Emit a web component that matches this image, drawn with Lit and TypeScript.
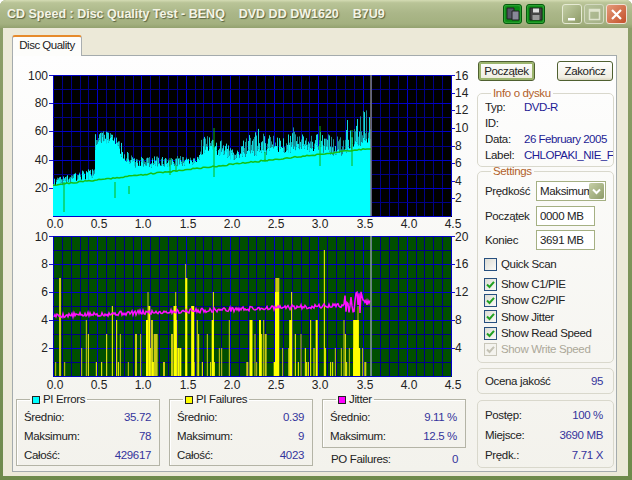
import { LitElement, html, css, svg } from "lit";
import { customElement } from "lit/decorators.js";

const X0 = 53, X1 = 451, PX = (X1 - X0) / 4.5;
const T0 = 75, T1 = 216, B0 = 236, B1 = 376;
const END = 371;

function rng(seed: number) {
  let s = seed;
  return () => {
    s = (s * 1664525 + 1013904223) % 4294967296;
    return s / 4294967296;
  };
}
function lerp(pts: number[][], u: number) {
  for (let i = 1; i < pts.length; i++) {
    if (u <= pts[i][0]) {
      const [a, b] = pts[i - 1], [c, d] = pts[i];
      return b + ((u - a) / (c - a)) * (d - b);
    }
  }
  return pts[pts.length - 1][1];
}
const SOLID = [[0,24],[.1,24],[.2,27],[.3,28],[.4,29],[.475,30],[.48,50],[.55,55],[.7,54],[.75,46],[.8,41],[.85,38],[1,37],[1.5,38],[1.65,39],[1.7,47],[1.8,50],[1.85,46],[1.95,44],[2,42],[2.2,45],[2.5,47],[2.7,48],[3,49],[3.2,45],[3.33,47],[3.4,52],[3.6,54]];
const ENV = [[0,27],[.2,29],[.3,32],[.47,35],[.48,62],[.6,60],[.7,58],[.8,50],[.9,42],[1,42],[1.4,43],[1.5,42],[1.65,42],[1.68,56],[1.8,62],[1.9,54],[2,50],[2.05,48],[2.2,56],[2.3,64],[2.4,58],[2.7,60],[2.71,70],[2.75,58],[3,60],[3.2,57],[3.3,58],[3.35,77],[3.5,76],[3.6,74]];
const YT = (v: number) => T1 - v * 1.41;
const YB = (v: number) => B1 - v * 14;

function cyanPaths() {
  const r = rng(7);
  let solid = "", spikes = "", bright = "";
  for (let x = X0 + 0.5; x < END; x += 1) {
    const u = (x - X0) / PX;
    const s = lerp(SOLID, u) + (r() - 0.5) * 6;
    const e = s + (lerp(ENV, u) - s) * (0.15 + 0.85 * r());
    solid += `M${x} ${T1}V${YT(s).toFixed(1)}`;
    if (e > s) {
      const seg = `M${x} ${YT(s).toFixed(1)}V${YT(e).toFixed(1)}`;
      if (r() < 0.4) bright += seg;
      else if (r() < 0.75) spikes += seg;
    }
  }
  return { solid, spikes, bright };
}
function greenPath() {
  const r = rng(21);
  let d = "";
  for (let x = X0; x <= END; x += 2) {
    const u = (x - X0) / PX;
    d += `${d ? "L" : "M"}${x} ${YT(22 + (26 * u) / 3.6 + (r() - 0.5) * 1).toFixed(1)}`;
  }
  return d;
}
const GREEN_SPIKES = [[64,182,212],[115,182,198],[129,186,194],[170,158,175],[176,165,172],[214,128,177],[265,152,162],[320,126,166],[352,130,166]];

function magentaPath() {
  const r = rng(5);
  let d = "";
  for (let x = X0 + 1; x <= END - 1; x += 1) {
    const u = (x - X0) / PX;
    let v = 4.3 + (u / 3.3) * 0.75 + (r() - 0.5) * 0.32;
    if (u > 3.3) {
      const amp = u > 3.5 ? 0.35 : 1.6;
      v = 5.25 + (r() - 0.5) * amp;
    }
    d += `${d ? "L" : "M"}${x} ${YB(v).toFixed(1)}`;
  }
  return d;
}
const Z9 = (z: number) => 20 + z / 3;
const Z10 = (z: number) => 240 + z / 3;
const BARS: [number, number, number, number][] = [
  [Z9(107),1,1,1],[Z9(120),7,2,1],[Z9(134),1,1,1],[Z9(185),2,1,1],[Z9(199),4,1,1],[Z9(205),3,1,0],[Z9(229),1,1,0],[Z9(245),1,1,0],[Z9(260),3,1,0],[Z9(277),5,1,0],[Z9(290),4,1,0],[Z9(295),1,1,0],[Z9(301),3,1,1],[Z9(325),1,1,1],[Z9(348),3,2,1],[Z9(362),3,1,1],[Z9(384),6,1,1],[Z9(381),4,2,0],[Z9(388),5,2,0],[Z9(391),2,1,0],[Z9(396),4,2,1],[Z9(400),1,3,0],[Z9(407),3,4,1],[Z9(432),1,2,1],[Z9(456),3,2,1],[Z9(467),6,1,1],[Z9(465),5,3,0],[Z9(470),4,1,0],[Z9(475),2,2,0],[Z9(481),2,2,0],[Z9(497),8,1,1],[Z9(499),7,2,0],[Z9(518),5,3,0],[Z9(522),1,1,0],[Z9(532),4,1,1],[Z9(536),3,1,0],[Z9(547),1,1,0],[Z9(562),3,1,1],[Z9(572),1,1,0],[Z9(578),4,2,0],[Z9(580),6,1,0],[Z9(583),1,1,0],[Z9(598),2,1,1],[Z9(605),2,1,1],[Z9(628),4,1,1],[Z9(682),1,2,1],
  [Z10(22),1,1,1],[Z10(33),4,3,0],[Z10(45),3,1,1],[Z10(50),1,1,1],[Z10(60),4,2,0],[Z10(65),3,1,0],[Z10(71),4,1,1],[Z10(77),3,2,1],[Z10(104),1,2,0],[Z10(112),7,4,1],[Z10(111),6,4,0],[Z10(128),2,1,1],[Z10(146),2,1,1],[Z10(152),4,3,0],[Z10(155),6,1,0],[Z10(166),3,1,0],[Z10(175),1,1,0],[Z10(183),3,1,1],[Z10(196),2,1,0],[Z10(200),1,1,0],[Z10(205),1,1,0],[Z10(212),4,1,0],[Z10(222),2,1,0],[Z10(230),4,2,0],[Z10(253),9,1,0],[Z10(256),2,1,0],[Z10(272),1,1,0],[Z10(278),1,1,0],[Z10(286),2,1,1],[Z10(304),2,1,1],[Z10(312),4,1,1],[Z10(316),3,1,0],[Z10(320),1,1,0],[Z10(328),2,1,1],[Z10(344),4,3,0],[Z10(354),5,1,1],[Z10(350),2,7,0],[Z10(352),4,3,0],[Z10(368),2,1,1],[Z10(376),1,2,1],
];

function grid(y0: number, y1: number, hCount: number) {
  const out = [];
  for (let i = 0; i <= 45; i++) {
    const x = Math.round(X0 + i * PX / 10) + 0.5;
    out.push(svg`<line class=${i % 5 === 0 ? "maj" : "min"} x1=${x} x2=${x} y1=${y0} y2=${y1}></line>`);
  }
  for (let i = 0; i <= hCount; i++) {
    const y = Math.round(y0 + ((y1 - y0) * i) / hCount) + 0.5;
    out.push(svg`<line class=${i % 2 === 0 ? "maj" : "min"} x1=${X0} x2=${X1} y1=${y} y2=${y}></line>`);
  }
  return out;
}
function xLabels(y: number) {
  return ["0.0","0.5","1.0","1.5","2.0","2.5","3.0","3.5","4.0","4.5"].map(
    (t, i) => svg`<text class="lbl mid" x=${Math.round(X0 + 2 + i * PX / 2)} y=${y}>${t}</text>`
  );
}
function yLabels(y0: number, y1: number, vals: string[], right: boolean) {
  const step = (y1 - y0) / vals.length;
  return vals.map((t, i) => {
    const y = Math.round(y0 + i * step);
    return svg`
      <line class="tick" x1=${right ? X1 : 49} x2=${right ? 455 : X0} y1=${y + 0.5} y2=${y + 0.5}></line>
      <text class=${right ? "lbl" : "lbl end"} x=${right ? 455 : 48} y=${y + 4 + (i === 0 ? 1 : 0)}>${t}</text>`;
  });
}

const Check = svg`<path d="M3 6.500 5.500 9 10 3.800" fill="none" stroke-width="2"></path>`;

@customElement("app-root")
export class AppRoot extends LitElement {
  static styles = css`
    :host { display: block; width: 632px; height: 480px; overflow: hidden; font: 11.5px "Liberation Sans", Arial, sans-serif; letter-spacing: -0.35px; color: #222; }
    * { box-sizing: border-box; }
    .win { width: 632px; height: 480px; display: flex; flex-direction: column;
      background: linear-gradient(#8f9f6b, #6e8a4b); border-radius: 6px 6px 0 0; }
    .title { height: 28px; flex: none; display: flex; align-items: center; padding: 0 5px 0 7px;
      background: linear-gradient(#d4dcb4 0, #b9c497 10%, #abb789 45%, #a3b07f 85%, #93a16f 100%); border-radius: 6px 6px 0 0; }
    .title h1 { margin: 0; flex: 1; font: bold 12.5px "Liberation Sans", Arial, sans-serif; letter-spacing: 0; white-space: pre; color: #f4f4e6; text-shadow: 1px 1px 1px #5a6440; }
    .tools { display: flex; gap: 4px; margin-right: 17px; }
    .tool { width: 19px; height: 20px; border-radius: 3px; background: #0a8a14; border: 1px solid #045c0c; box-shadow: inset 0 0 2px #7fdc7f; display: grid; place-items: center; }
    .caps { display: flex; gap: 2px; }
    .cap { width: 20px; height: 20px; border-radius: 3px; border: 1px solid #e6ead4; background: linear-gradient(135deg, #c2cda4, #8e9b68); display: grid; place-items: center; }
    .cap.dim { background: linear-gradient(135deg, #b6c29a, #a4b086); border-color: #d3d9c0; }
    .cap.close { width: 21px; background: linear-gradient(135deg, #e49a7a, #c4502a); border-color: #f0e0d4; }
    .client { flex: 1; margin: 0 4px 4px 3px; background: #ece9d8; padding: 7px 11px 4px 9px; display: flex; flex-direction: column; }
    .tab { align-self: flex-start; width: 70px; height: 21px; margin-bottom: -1px; position: relative; z-index: 1; background: #fdfdfb;
      border: 1px solid #a9aeb0; border-bottom: 0; border-top: 2px solid #e68b2c; border-radius: 3px 3px 0 0;
      text-align: center; line-height: 17px; letter-spacing: -0.5px; }
    .panel { flex: 1; display: flex; border: 1px solid #a4abad; background: linear-gradient(#fefefe, #f3f2ec); min-height: 0; }
    .left { width: 464px; flex: none; padding: 9px 0 0 3px; display: flex; flex-direction: column; }
    svg.chart { display: block; width: 458px; height: 328px; margin-left: -4px; }
    .min { stroke: #000088; stroke-width: 1; }
    .maj { stroke: #0000c8; stroke-width: 1; }
    .tick { stroke: #1414d0; stroke-width: 1; }
    .lbl { font: 12px "Liberation Sans", Arial, sans-serif; letter-spacing: 0; fill: #222; }
    .end { text-anchor: end; }
    .mid { text-anchor: middle; }
    .stats { display: flex; gap: 9px; }
    fieldset { margin: 0; padding: 0; min-width: 0; }
    legend { padding: 0 2px; margin-left: 6px; line-height: 13px; display: flex; align-items: center; gap: 3px; }
    .sq { width: 144px; height: 73px; border: 1px solid #b4b4a6; box-shadow: inset 1px 1px 0 #fff; padding: 1px 8px 0 7px; }
    .sq.short { height: 55px; }
    .swatch { width: 8px; height: 8px; border: 1px solid #222; display: inline-block; }
    .cy { background: #00ffff; } .ye { background: #ffff00; } .ma { background: #ff00ff; }
    .row { display: flex; justify-content: space-between; align-items: center; height: 19px; }
    .val { color: #34349c; }
    .col3 { width: 144px; display: flex; flex-direction: column; }
    .po { padding: 1px 8px 0 9px; }
    .right { width: 137px; flex: none; padding-top: 5px; display: flex; flex-direction: column; }
    .btns { display: flex; justify-content: space-between; padding: 0 1px; height: 20px; }
    .btn { width: 56px; border-radius: 3px; border: 1px solid #4f6030; background: linear-gradient(#fff, #f0eee2 85%, #d8d4c0); display: grid; place-items: center; }
    .btn.def { box-shadow: inset 0 0 0 2px #9cb56e; width: 57px; }
    .rd { border: 1px solid #d9d8cc; border-radius: 5px; }
    .info { margin-top: 6px; height: 80px; padding: 0 0 0 7px; }
    .rd > legend { color: #b2612a; }
    .irow { display: grid; grid-template-columns: 39px 1fr; height: 16px; line-height: 14px; white-space: nowrap; overflow: hidden; }
    .navy { color: #1c1c94; letter-spacing: -0.5px; }
    .settings { margin-top: -2px; height: 198px; padding: 3px 0 0 7px; }
    .frow { display: grid; grid-template-columns: 51px auto; align-items: center; justify-content: start; }
    .frow + .frow { margin-top: 4px; }
    .frow.first { height: 21px; align-items: start; }
    .frow.first > span { line-height: 20px; }
    .sel, .inp { height: 20px; border: 1px solid #a5b083; background: #fff; display: flex; align-items: center; padding-left: 3px; overflow: hidden; white-space: nowrap; }
    .sel { width: 70px; justify-content: space-between; padding-right: 1px; }
    .sel span { width: 51px; overflow: hidden; }
    .arrow { width: 15px; height: 16px; flex: none; border-radius: 2px; background: linear-gradient(135deg, #c6cfa6, #8d9b69); display: grid; place-items: center; }
    .inp { width: 59px; }
    .chk { display: flex; align-items: center; gap: 4px; height: 16.3px; margin-left: -1px; }
    .chk.q { margin: 6px 0 4px -1px; height: 16px; }
    .box { width: 13px; height: 13px; flex: none; border: 1px solid #27507f; background: linear-gradient(135deg, #dcdcd4, #fbfbf8); display: grid; place-items: center; }
    .box svg { stroke: #21a121; width: 13px; height: 13px; margin: -1px; }
    .off { color: #aca899; }
    .off .box { border-color: #c9c7ba; background: #f4f3ee; }
    .off .box svg { stroke: #c4c2b4; }
    .ocena { margin-top: 5px; height: 26px; padding: 0 10px 0 7px; }
    .prog { margin-top: 6px; height: 68px; padding: 4px 10px 0 7px; }
    .prog .row { height: 20px; }
    .ocena .row { height: 24px; }
  `;

  private stat(label: string, val: string) {
    return html`<div class="row"><span>${label}</span><span class="val">${val}</span></div>`;
  }
  private irow(label: string, val: string) {
    return html`<div class="irow"><span>${label}</span><span class="navy">${val}</span></div>`;
  }
  private chk(label: string, on: boolean, cls = "") {
    return html`<div class="chk ${cls}"><span class="box">${on ? html`<svg viewBox="0 0 13 13">${Check}</svg>` : ""}</span>${label}</div>`;
  }

  render() {
    const { solid, spikes, bright } = cyanPaths();
    return html`
      <div class="win">
        <div class="title">
          <h1>CD Speed : Disc Quality Test - BENQ    DVD DD DW1620    B7U9</h1>
          <div class="tools">
            <div class="tool"><svg width="14" height="14" viewBox="0 0 14 14"><path d="M1 1h7v11H1z" fill="#556" stroke="#222"></path><path d="M6 4h7v9H6z" fill="#889" stroke="#222"></path></svg></div>
            <div class="tool"><svg width="14" height="14" viewBox="0 0 14 14"><path d="M1 1h12v12H1z" fill="#444" stroke="#222"></path><path d="M4 1.500h6v4H4z" fill="#ddd"></path><path d="M3.500 8h7v5h-7z" fill="#999"></path></svg></div>
          </div>
          <div class="caps">
            <div class="cap"><svg width="13" height="13" viewBox="0 0 13 13"><path d="M2 10h7v2.500H2z" fill="#fff"></path></svg></div>
            <div class="cap dim"><svg width="13" height="13" viewBox="0 0 13 13"><path d="M1.500 1.500h10v10h-10z M1.500 3h10" fill="none" stroke="#dfe4cd" stroke-width="1.500"></path></svg></div>
            <div class="cap close"><svg width="13" height="13" viewBox="0 0 13 13"><path d="M2 2l9 9M11 2l-9 9" stroke="#fff" stroke-width="2.200"></path></svg></div>
          </div>
        </div>
        <div class="client">
          <div class="tab">Disc Quality</div>
          <div class="panel">
            <div class="left">
              <svg class="chart" viewBox="12 65 458 328">
                <rect x=${X0} y=${T0} width=${X1 - X0 + 1} height=${T1 - T0 + 1} fill="#000"></rect>
                ${grid(T0, T1, 10)}
                <path d=${spikes} stroke="#178f96" stroke-width="1" fill="none"></path>
                <path d=${bright} stroke="#10d8dc" stroke-width="1" fill="none"></path>
                <path d=${solid} stroke="#00ffff" stroke-width="1" fill="none"></path>
                <line x1=${END} x2=${END} y1=${T0} y2=${T1} stroke="#808080" stroke-width="1.500"></line>
                ${GREEN_SPIKES.map(([x, a, b]) => svg`<line x1=${x} x2=${x} y1=${a} y2=${b} stroke="#0fb50f" stroke-width="1"></line>`)}
                <path d=${greenPath()} stroke="#14c014" stroke-width="1.500" fill="none"></path>
                ${yLabels(T0, T1, ["100", "80", "60", "40", "20"], false)}
                ${yLabels(T0, T1, ["16", "14", "12", "10", "8", "6", "4", "2"], true)}
                ${xLabels(228)}

                <rect x=${X0} y=${B0} width=${X1 - X0 + 1} height=${B1 - B0 + 1} fill="#004f00"></rect>
                ${grid(B0, B1, 10)}
                <line x1=${END} x2=${END} y1=${B0} y2=${B1} stroke="#8aa88a" stroke-width="1.500"></line>
                ${BARS.map(([x, h, w, dim]) => svg`<rect x=${x - w / 2} y=${YB(h)} width=${w} height=${h * 14} fill=${dim ? "#c8c814" : "#ffff00"}></rect>`)}
                <path d=${magentaPath()} stroke="#ff10ff" stroke-width="1.500" fill="none"></path>
                ${yLabels(B0, B1, ["10", "8", "6", "4", "2"], false)}
                ${yLabels(B0, B1, ["20", "16", "12", "8", "4"], true)}
                ${xLabels(389)}
              </svg>
              <div class="stats">
                <fieldset class="sq"><legend><span class="swatch cy"></span>PI Errors</legend>
                  ${this.stat("Średnio:", "35.72")}${this.stat("Maksimum:", "78")}${this.stat("Całość:", "429617")}
                </fieldset>
                <fieldset class="sq"><legend><span class="swatch ye"></span>PI Failures</legend>
                  ${this.stat("Średnio:", "0.39")}${this.stat("Maksimum:", "9")}${this.stat("Całość:", "4023")}
                </fieldset>
                <div class="col3">
                  <fieldset class="sq short"><legend><span class="swatch ma"></span>Jitter</legend>
                    ${this.stat("Średnio:", "9.11 %")}${this.stat("Maksimum:", "12.5 %")}
                  </fieldset>
                  <div class="po">${this.stat("PO Failures:", "0")}</div>
                </div>
              </div>
            </div>
            <div class="right">
              <div class="btns"><div class="btn def">Początek</div><div class="btn">Zakończ</div></div>
              <fieldset class="rd info"><legend>Info o dysku</legend>
                ${this.irow("Typ:", "DVD-R")}${this.irow("ID:", "")}${this.irow("Data:", "26 February 2005")}${this.irow("Label:", "CHLOPAKI_NIE_F")}
              </fieldset>
              <fieldset class="rd settings"><legend>Settings</legend>
                <div class="frow first"><span>Prędkość</span><div class="sel"><span>Maksimum</span><div class="arrow"><svg width="9" height="7" viewBox="0 0 9 7"><path d="M1 1.500 4.500 5 8 1.500" fill="none" stroke="#fff" stroke-width="2"></path></svg></div></div></div>
                <div class="frow"><span>Początek</span><div class="inp">0000 MB</div></div>
                <div class="frow"><span>Koniec</span><div class="inp">3691 MB</div></div>
                ${this.chk("Quick Scan", false, "q")}
                ${this.chk("Show C1/PIE", true)}${this.chk("Show C2/PIF", true)}${this.chk("Show Jitter", true)}${this.chk("Show Read Speed", true)}${this.chk("Show Write Speed", true, "off")}
              </fieldset>
              <fieldset class="rd ocena">${this.stat("Ocena jakość", "95")}</fieldset>
              <fieldset class="rd prog">${this.stat("Postęp:", "100 %")}${this.stat("Miejsce:", "3690 MB")}${this.stat("Prędk.:", "7.71 X")}</fieldset>
            </div>
          </div>
        </div>
      </div>
    `;
  }
}
